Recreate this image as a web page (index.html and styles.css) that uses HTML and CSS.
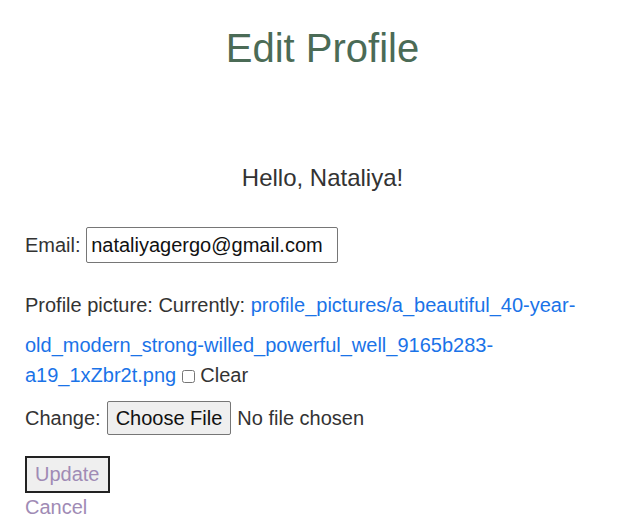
FILE: index.html
```html
<!DOCTYPE html>
<html>
<head>
<meta charset="utf-8">
<title>Edit Profile</title>
<link rel="stylesheet" href="styles.css">
</head>
<body>
<h1 class="title">Edit Profile</h1>
<p class="greeting">Hello, Nataliya!</p>
<form class="form">
  <p class="row"><label>Email:</label> <input class="email" type="text" value="nataliyagergo@gmail.com"></p>
  <p class="pic"><label class="pic-label">Profile picture:</label> Currently: <a class="link" href="#">profile_pictures/a_beautiful_40-year-old_modern_strong-willed_powerful_well_9165b283-a19_1xZbr2t.png</a> <input class="check" type="checkbox"> <label>Clear</label></p>
  <div class="change">Change: <span class="file-btn">Choose File</span> <span class="file-none">No file chosen</span></div>
  <button class="update" type="button">Update</button>
  <a class="cancel" href="#">Cancel</a>
</form>
</body>
</html>
```
FILE: styles.css
```css
body {
  margin: 0;
  padding: 0 11px 0 25px;
  font-family: "Liberation Sans", Arial, sans-serif;
  font-size: 20px;
  color: #333;
  background: #fff;
}
.title {
  margin: 25px 0 0;
  text-align: center;
  font-weight: normal;
  font-size: 40px;
  line-height: 46px;
  color: #4b6b56;
}
.greeting {
  margin: 93px 0 0;
  text-align: center;
  font-size: 24px;
  line-height: 28px;
}
.form { margin-top: 35px; }
.row {
  margin: 0;
  height: 36px;
  line-height: 36px;
}
.email {
  font: inherit;
  color: #111;
  width: 252px;
  height: 36px;
  box-sizing: border-box;
  padding: 0 4px;
  border: 1px solid #767676;
  border-radius: 2px;
  margin: 0;
  vertical-align: top;
}
.pic { margin: 27px 0 0; line-height: 30px; }
.pic-label { display: inline-block; margin-bottom: 10px; }
.link { color: #1a73e8; text-decoration: none; }
.check {
  margin: 0;
  width: 13px;
  height: 13px;
  vertical-align: -1px;
}
.change {
  margin-top: 11px;
  height: 34px;
  display: flex;
  align-items: center;
  gap: 6px;
}
.file-btn {
  display: inline-block;
  box-sizing: border-box;
  height: 34px;
  line-height: 32px;
  padding: 0 8px;
  border: 1px solid #767676;
  border-radius: 2px;
  background: #efefef;
  color: #111;
}
.update {
  display: block;
  margin-top: 21px;
  font: inherit;
  color: #a08bb5;
  background: #efefef;
  border: 2px solid #222;
  padding: 0 8px;
  height: 37px;
}
.cancel {
  display: block;
  color: #a08bb5;
  text-decoration: none;
  line-height: 28px;
  width: max-content;
}
```
